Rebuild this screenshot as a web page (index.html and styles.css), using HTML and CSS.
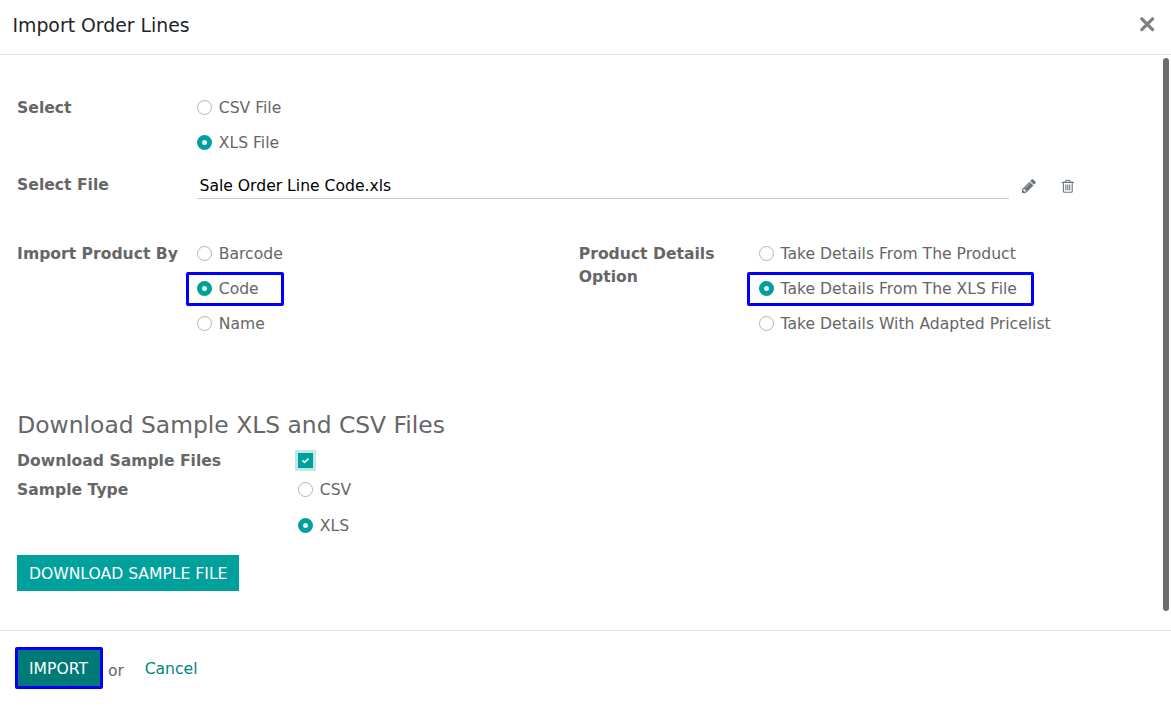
FILE: index.html
```html
<!DOCTYPE html>
<html lang="en">
<head>
<meta charset="utf-8">
<title>Import Order Lines</title>
<link rel="stylesheet" href="styles.css">
</head>
<body>
<div class="modal">
  <header class="modal-header">
    <h4 class="modal-title">Import Order Lines</h4>
    <button class="close" type="button" aria-label="Close">
      <svg width="16" height="16" viewBox="0 0 16 16"><path d="M2.8 2.8 L13.6 13.6 M13.6 2.8 L2.8 13.6"/></svg>
    </button>
  </header>
  <main class="modal-body">
    <div class="content">
      <section class="row row-select">
        <div class="label">Select</div>
        <div class="options">
          <div class="option"><i class="radio"></i><span>CSV File</span></div>
          <div class="option"><i class="radio on"></i><span>XLS File</span></div>
        </div>
      </section>
      <section class="row row-file">
        <div class="label">Select File</div>
        <div class="file-name">Sale Order Line Code.xls</div>
        <svg class="pencil" width="14" height="14" viewBox="0 0 1536 1536"><path d="M363 1408l91-91-235-235-91 91v107h128v128zM886 480q0-22-22-22-10 0-17 7l-542 542q-7 7-7 17 0 22 22 22 10 0 17-7l542-542q7-7 7-17zM832 288l416 416-832 832H0v-416zM1515 384q0 53-37 90l-166 166-416-416 166-165q36-38 90-38 53 0 91 38l235 234q37 39 37 91z"/></svg>
        <svg class="trash" width="14" height="14" viewBox="0 0 14 14"><path d="M.8 3.4h12M4.3 3.2l.6-1.5q.2-.4.6-.4h2.6q.4 0 .6.4l.6 1.5M2.4 3.4v8.5q0 1.4 1.1 1.4h6.6q1.1 0 1.1-1.4V3.4M4.9 5.4v5.8M6.8 5.4v5.8M8.7 5.4v5.8"/></svg>
      </section>
      <section class="columns">
        <div class="row column">
          <div class="label">Import Product By</div>
          <div class="options">
            <div class="option"><i class="radio"></i><span>Barcode</span></div>
            <div class="option"><i class="radio on"></i><span>Code</span><b class="mark mark-code"></b></div>
            <div class="option"><i class="radio"></i><span>Name</span></div>
          </div>
        </div>
        <div class="row column">
          <div class="label">Product Details Option</div>
          <div class="options">
            <div class="option"><i class="radio"></i><span>Take Details From The Product</span></div>
            <div class="option"><i class="radio on"></i><span>Take Details From The XLS File</span><b class="mark mark-details"></b></div>
            <div class="option"><i class="radio"></i><span>Take Details With Adapted Pricelist</span></div>
          </div>
        </div>
      </section>
      <h2 class="heading">Download Sample XLS and CSV Files</h2>
      <section class="row row-check">
        <div class="label wide">Download Sample Files</div>
        <div class="checkbox"><svg width="15" height="15" viewBox="0 0 15 15"><path d="M4.5 7.5L6.7 9.4L10.4 5.7"/></svg></div>
      </section>
      <section class="row row-type">
        <div class="label wide">Sample Type</div>
        <div class="options">
          <div class="option"><i class="radio"></i><span>CSV</span></div>
          <div class="option"><i class="radio on"></i><span>XLS</span></div>
        </div>
      </section>
      <button class="btn btn-download" type="button">DOWNLOAD SAMPLE FILE</button>
    </div>
    <div class="scroll-track"><div class="scroll-thumb"></div></div>
  </main>
  <footer class="modal-footer">
    <button class="btn btn-import" type="button">IMPORT<b class="mark mark-import"></b></button>
    <span class="or">or</span>
    <a class="cancel">Cancel</a>
  </footer>
</div>
</body>
</html>
```
FILE: styles.css
```css
* { box-sizing: border-box; }
body {
  margin: 0;
  background: #fff;
  color: #666;
  font: 15.6px/23px "DejaVu Sans", sans-serif;
  overflow: hidden;
}
.modal { height: 708px; display: flex; flex-direction: column; }
.modal-header {
  height: 55px;
  flex: none;
  display: flex;
  justify-content: space-between;
  align-items: flex-start;
  padding: 12px 16px 0 12.5px;
  border-bottom: 1px solid #dee2e6;
}
.modal-title { margin: 0; font-size: 18.85px; line-height: 28px; font-weight: 400; color: #212529; }
.close { width: 16px; height: 16px; margin-top: 4px; padding: 0; border: 0; background: none; }
.close svg { display: block; fill: none; stroke: #7f7f7f; stroke-width: 3.2; stroke-linecap: round; }
.modal-body { height: 575px; flex: none; display: flex; }
.content { flex: 1; padding: 42px 0 0 17px; }
.row { display: flex; align-items: flex-start; }
.label { width: 180px; flex: none; padding: 0 10px 0 .1px; font-weight: 700; }
.label.wide { width: 281px; }
.option { position: relative; display: flex; align-items: flex-start; gap: 6.8px; height: 23px; margin-bottom: 12.2px; white-space: nowrap; }
.radio { width: 15px; height: 15px; flex: none; margin-top: 3px; border: 1px solid #adb5bd; border-radius: 50%; background: #fff; }
.radio.on { border: 5px solid #00a09d; background: #eee; }
.row-select { height: 77px; }
.row-file { height: 69px; }
.file-name { width: 812px; height: 25px; padding: 1px 2.5px 0; border-bottom: 1px solid #ccc; color: #000; }
.pencil { margin: 5px 0 0 13px; fill: #6c757d; }
.trash { margin: 5px 0 0 25px; fill: none; stroke: #6c757d; stroke-width: 1.1; }
.columns { height: 166px; display: flex; }
.column { width: 561.7px; }
.heading { margin: 0; height: 41px; padding-left: .3px; font-size: 23.4px; line-height: 32px; font-weight: 400; }
.row-check { height: 29px; }
.checkbox { width: 15px; height: 15px; margin-top: 3px; background: #00a09d; box-shadow: 0 0 0 3px #bfe7e6; }
.checkbox svg { display: block; fill: none; stroke: #fff; stroke-width: 1.7; }
.row-type { height: 76px; }
.row-type .option { margin-bottom: 12.6px; }
.btn { display: block; margin: 0; padding: 2px 12px 0; border: 0; color: #fff; background: #00a09d; font: inherit; white-space: nowrap; }
.btn-download { width: 222px; height: 36px; }
.scroll-track { width: 10px; padding: 3px 0 0 2px; }
.scroll-thumb { width: 6px; height: 553px; border-radius: 3px; background: #6d6d6d; }
.modal-footer { flex: 1; display: flex; align-items: flex-start; padding: 19px 17px 0; border-top: 1px solid #dee2e6; }
.btn-import { position: relative; width: 84px; height: 36px; text-align: left; background: #007a77; }
.or { margin: 10px 0 0 7px; }
.cancel { margin: 8px 0 0 20.7px; color: #008784; }
.mark { position: absolute; border: 3px solid #0000fa; border-radius: 2px; }
.mark-code { left: -11px; top: -6px; width: 98px; height: 34px; }
.mark-details { left: -12px; top: -6px; width: 287px; height: 34px; }
.mark-import { left: -2px; top: -3px; width: 88px; height: 42px; }
```
